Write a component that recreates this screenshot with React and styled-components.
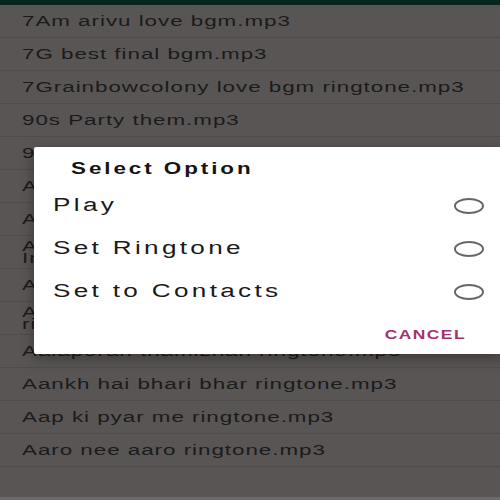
import React from "react";
import styled, { createGlobalStyle } from "styled-components";

const Global = createGlobalStyle`
  html, body { margin: 0; padding: 0; }
  body {
    width: 500px;
    height: 500px;
    overflow: hidden;
    background: #595554;
    font-family: "Liberation Sans", Arial, sans-serif;
  }
`;

const Screen = styled.div`
  position: relative;
  width: 500px;
  height: 500px;
  display: flex;
  flex-direction: column;
  background: #595554;
  overflow: hidden;
`;

const StatusBar = styled.div`
  height: 5px;
  flex: none;
  background: #08261d;
`;

const List = styled.div`
  display: flex;
  flex-direction: column;
  flex: 1;
`;

const Row = styled.div`
  height: 32px;
  flex: none;
  display: flex;
  align-items: center;
  padding-left: 22px;
  border-bottom: 1px solid #4f4c4b;
  overflow: hidden;
`;

const RowText = styled.span`
  display: inline-block;
  width: 285px;
  font-size: 14px;
  line-height: ${(p) => (p.$wrap ? "12px" : "16px")};
  letter-spacing: 0.6px;
  color: #1b1b1b;
  transform: scaleX(1.6);
  transform-origin: left center;
  white-space: ${(p) => (p.$wrap ? "normal" : "nowrap")};
`;

const BottomBar = styled.div`
  height: 3px;
  flex: none;
  background: #6d6a69;
`;

const Dialog = styled.div`
  position: absolute;
  left: 34px;
  top: 147px;
  width: 470px;
  height: 207px;
  background: #ffffff;
  border-radius: 2px 0 0 2px;
  box-shadow: 0 4px 14px rgba(0, 0, 0, 0.35);
  display: flex;
  flex-direction: column;
`;

const Title = styled.div`
  height: 20px;
  padding: 12px 0 5px 37px;
  display: flex;
  align-items: center;
`;

const TitleText = styled.span`
  display: inline-block;
  font-size: 16px;
  font-weight: bold;
  letter-spacing: 2.1px;
  color: #141414;
  transform: scaleX(1.4);
  transform-origin: left center;
  white-space: nowrap;
`;

const Option = styled.div`
  height: 43px;
  display: flex;
  align-items: center;
  padding-left: 19px;
  padding-right: 20px;
`;

const OptionText = styled.span`
  display: inline-block;
  font-size: 18px;
  letter-spacing: 2.3px;
  color: #1a1a1a;
  transform: scaleX(1.45);
  transform-origin: left center;
  white-space: nowrap;
`;

const Radio = styled.span`
  margin-left: auto;
  width: 26px;
  height: 12px;
  border: 2px solid #666666;
  border-radius: 50%;
  box-sizing: content-box;
`;

const Actions = styled.div`
  flex: 1;
  display: flex;
  align-items: center;
  justify-content: flex-end;
  padding-right: 38px;
  padding-top: 2px;
`;

const CancelText = styled.span`
  display: inline-block;
  font-size: 12px;
  font-weight: bold;
  letter-spacing: 1px;
  color: #a3336b;
  transform: scaleX(1.45);
  transform-origin: right center;
  white-space: nowrap;
`;

const songs = [
  { t: "7Am arivu love bgm.mp3" },
  { t: "7G best final bgm.mp3" },
  { t: "7Grainbowcolony love bgm ringtone.mp3" },
  { t: "90s Party them.mp3" },
  { t: "96 movie bgm.mp3" },
  { t: "Aadi kuththu ringtone.mp3" },
  { t: "Aaja ve mahi ringtone.mp3" },
  { t: "Aaj se teri saari galiyan meri Instrumental.mp3", wrap: true },
  { t: "Aal izz well ringtone.mp3" },
  { t: "Aalaporan thamizhan mersal full ringtone.mp3", wrap: true },
  { t: "Aalaporan thamizhan ringtone.mp3" },
  { t: "Aankh hai bhari bhar ringtone.mp3" },
  { t: "Aap ki pyar me ringtone.mp3" },
  { t: "Aaro nee aaro ringtone.mp3" },
];

const options = ["Play", "Set Ringtone", "Set to Contacts"];

export default function App() {
  return (
    <>
      <Global />
      <Screen>
        <StatusBar />
        <List>
          {songs.map((s, i) => (
            <Row key={i}>
              <RowText $wrap={s.wrap}>{s.t}</RowText>
            </Row>
          ))}
        </List>
        <BottomBar />
        <Dialog>
          <Title>
            <TitleText>Select Option</TitleText>
          </Title>
          {options.map((o) => (
            <Option key={o}>
              <OptionText>{o}</OptionText>
              <Radio />
            </Option>
          ))}
          <Actions>
            <CancelText>CANCEL</CancelText>
          </Actions>
        </Dialog>
      </Screen>
    </>
  );
}
